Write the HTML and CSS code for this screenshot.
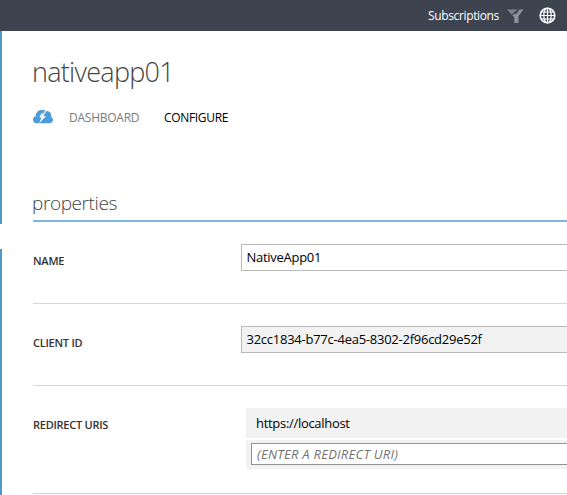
FILE: index.html
```html
<!DOCTYPE html>
<html lang="en">
<head>
<meta charset="utf-8">
<title>nativeapp01</title>
<link rel="stylesheet" href="styles.css">
</head>
<body>
<header class="topbar">
  <span class="subscriptions">Subscriptions</span>
  <svg class="filter" width="17" height="15" viewBox="0 0 17 15"><path d="M0 0.5H10.5L4.5 5.5Z" fill="#7e838b"/><path d="M12.5 0.5H16.5L11.5 7V14H7.3V8.5L5.3 6.3L7.5 4.7L9 5.2Z" fill="#8d9198"/></svg>
  <svg class="globe" width="17" height="17" viewBox="0 0 17 17" fill="none" stroke="#fff" stroke-width="1.2"><circle cx="8.5" cy="8.5" r="7.3" stroke-width="1.6"/><ellipse cx="8.5" cy="8.5" rx="3.7" ry="7.5"/><path d="M8.5 1V16M1 8.5H16M2.2 5H14.8M2.2 12H14.8"/></svg>
</header>
<div class="shell">
  <div class="rail"><div class="rail-top"></div><div class="rail-bottom"></div></div>
  <main class="content">
    <h1><span class="title-text">nativeapp01</span></h1>
    <nav>
      <svg class="cloud" width="20" height="14" viewBox="0 0 20 14"><path d="M4 13.2C1.5 13.2 0 11.8 0 9.8C0 8 1 6.7 2.8 6.3C2.5 4.5 3 3.2 4 2.6C4.7 1 6 0 8 0C10 0 10.5 .8 12 1.2C15 .6 18 2 18 4.6C18.4 5.1 18.4 6.5 18.2 7.3C19.4 7.8 20 8.8 20 10C20 12 18.4 13.2 16.3 13.2Z" fill="#4b9cd8"/><path d="M9.4 1.5L6.4 7.5H8.6L6 13.6L13 6H10.3L13.6 0.5Z" fill="#fff"/><path d="M9.6 0H12.4L10.5 3.5H8.5Z" fill="#4b9cd8"/></svg>
      <span class="tab dashboard">DASHBOARD</span>
      <span class="tab configure">CONFIGURE</span>
    </nav>
    <h2><span class="section-text">properties</span></h2>
    <div class="row name-row"><label class="l-name">NAME</label><div class="field"><span class="v-name">NativeApp01</span></div></div>
    <div class="row"><label class="l-client">CLIENT ID</label><div class="field readonly"><span class="v-client">32cc1834-b77c-4ea5-8302-2f96cd29e52f</span></div></div>
    <div class="row redirect-row"><label class="l-redirect">REDIRECT URIS</label>
      <div class="uris"><div class="uri"><span class="v-uri">https://localhost</span></div><div class="uri-new"><div class="entry"><span class="v-entry">(ENTER A REDIRECT URI)</span></div></div></div>
    </div>
  </main>
</div>
</body>
</html>
```
FILE: styles.css
```css
* { box-sizing: border-box; }
body { margin: 0; width: 567px; height: 495px; overflow: hidden; background: #fff; color: #000; font: 13px/18px "Open Sans", "Noto Sans", sans-serif; }
span, label { white-space: nowrap; }
.topbar { height: 31px; background: #3d4450; display: flex; align-items: flex-start; padding: 7px 10px 0 428px; color: #fff; }
.subscriptions { width: 79px; font-size: 12px; letter-spacing: -0.36px; }
.filter { flex: none; margin-top: 2px; }
.globe { flex: none; margin-left: 15px; }
.shell { display: flex; height: 464px; }
.rail { width: 2px; display: flex; flex-direction: column; gap: 25px; }
.rail-top { height: 193px; background: #4f9bc1; }
.rail-bottom { flex: 1; background: #4f9bc1; }
.content { flex: 1; min-width: 0; padding-left: 31px; }
h1 { margin: 0; padding-top: 21px; height: 78px; font-weight: 300; font-size: 27px; line-height: 40px; color: #444; }
.title-text { letter-spacing: -0.72px; margin-left: -1px; }
nav { display: flex; height: 80px; font-size: 12px; line-height: 18px; }
.cloud { margin-top: 1px; flex: none; }
.tab { display: block; }
.dashboard { width: 95px; margin-left: 16px; color: #7c7c7c; letter-spacing: -0.25px; }
.configure { letter-spacing: -0.33px; }
h2 { margin: 0; height: 33px; border-bottom: 2px solid #7fb5e2; font-weight: 300; font-size: 19px; line-height: 28px; color: #444; }
.section-text { letter-spacing: -0.4px; margin-left: -1px; }
.row { height: 82px; border-bottom: 1px solid #d6d6d6; display: flex; padding-top: 22px; }
.row label { flex: none; width: 208px; padding-top: 8px; font-size: 11px; line-height: 18px; font-weight: 600; letter-spacing: -0.25px; color: #333; }
.field { flex: 1; height: 27px; border: 1px solid #bababa; border-right: 0; padding: 3px 4.5px; }
.readonly { background: #f2f2f2; }
.v-name { letter-spacing: -0.28px; }
.v-client { letter-spacing: -0.25px; }
.v-uri { letter-spacing: -0.3px; }
.redirect-row { height: 108px; }
.uris { flex: 1; margin-left: 5px; display: flex; flex-direction: column; gap: 2px; }
.uri { height: 30px; padding: 6px 10px; background: #f2f2f2; }
.uri-new { height: 29px; padding: 3px 0 4px 5px; background: #f2f2f2; }
.entry { height: 22px; border: 1px solid #929292; border-right: 0; padding: 1px 5px; background: #fff; color: #737373; font-style: italic; }
.v-entry { letter-spacing: 0.25px; }
```
